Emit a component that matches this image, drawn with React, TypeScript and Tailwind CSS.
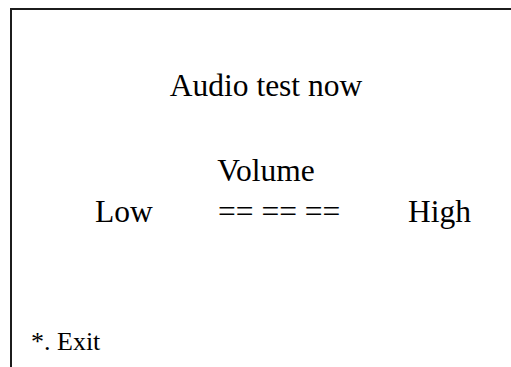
import React from 'react';

export default function App() {
    return (
        <div className="w-[511px] h-[367px] overflow-hidden bg-white pt-[8px] pl-[10px] text-black font-['Liberation_Serif','Times_New_Roman',serif]">
            {/* Screen frame: right and bottom edges run past the window */}
            <div className="w-[510px] h-[400px] border-t-2 border-l-2 border-[#1c1c1c] flex flex-col text-[31.5px] leading-[34px]">
                <div className="mt-[59px] text-center">Audio test now</div>
                <div className="mt-[51px] text-center">Volume</div>
                <div className="mt-[7px] flex pl-[83px]">
                    <span className="w-[123px]">Low</span>
                    <span className="w-[190px] whitespace-pre">== == ==</span>
                    <span>High</span>
                </div>
                <div className="mt-[96px] pl-[19px] text-[26px]">*. Exit</div>
            </div>
        </div>
    );
}
